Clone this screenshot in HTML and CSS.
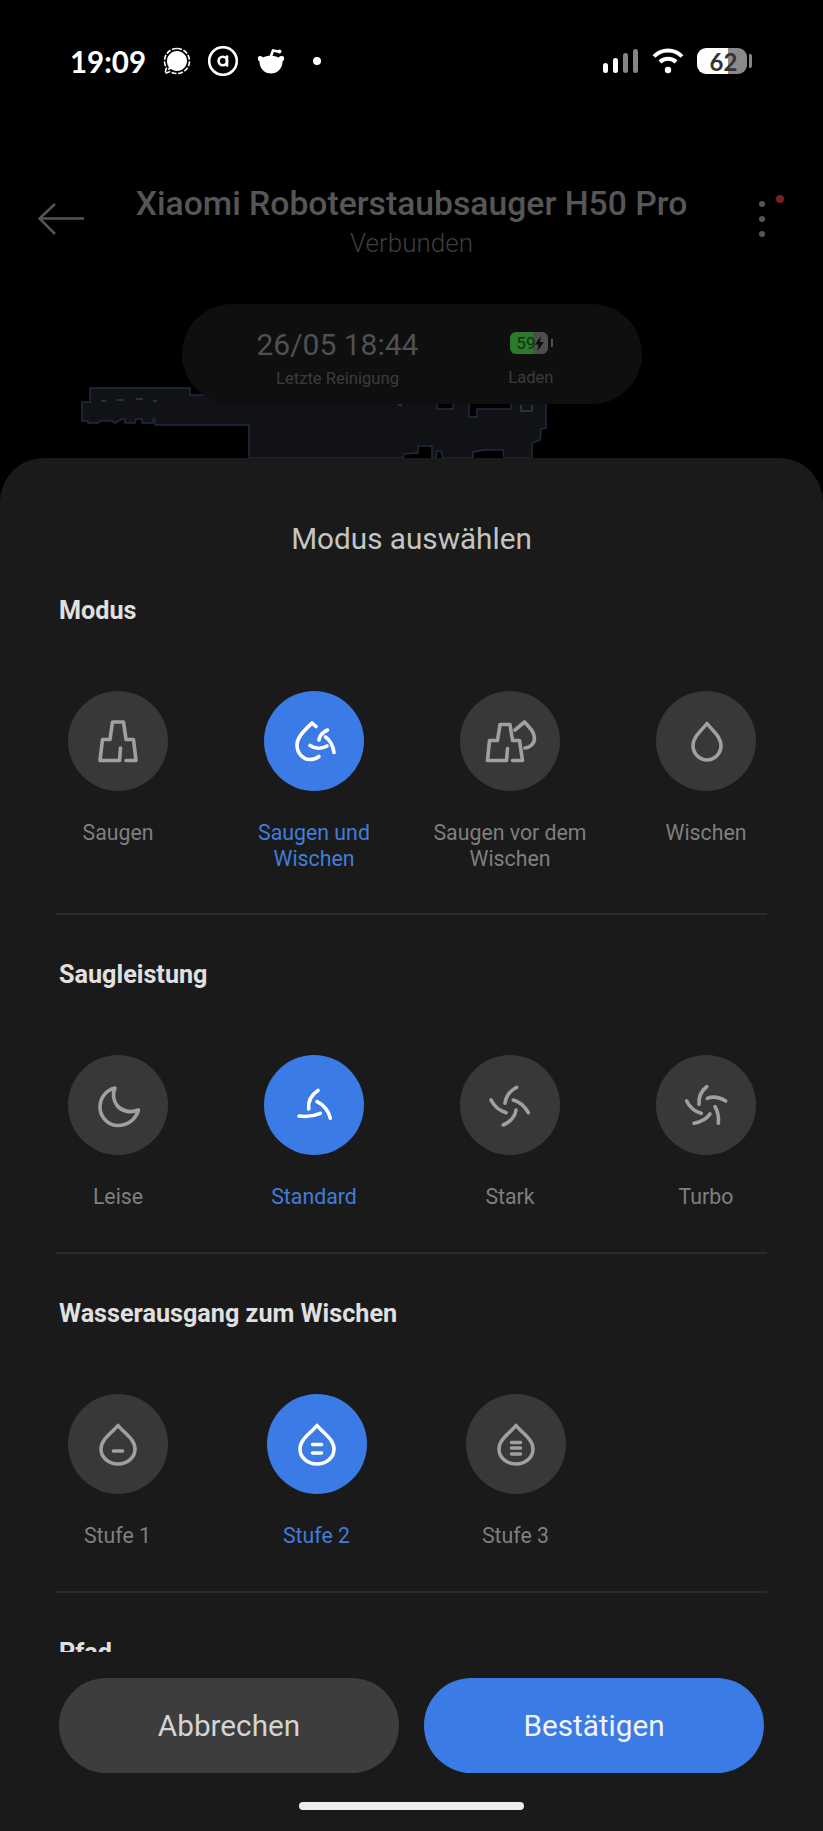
FILE: index.html
```html
<!DOCTYPE html>
<html lang="de">
<head>
	<meta charset="UTF-8">
	<meta name="viewport" content="width=device-width, initial-scale=1.0">
	<title>Modus auswählen</title>
	<link rel="stylesheet" href="styles.css">
</head>
<body>
<div class="phone">

	<!-- map behind the header -->
	<svg class="map" viewBox="0 0 823 470">
		<polygon class="map_room" points="90,388 190,388 190,395 546,395 546,428 541,429 540,440 532,443 532,458 504,458 503,450 484,450 473,452 473,458 443,458 441,451 437,451 436,458 432,458 432,446 418,446 418,453 404,454 403,458 249,458 249,425 155,425 155,419 153,419 153,423 142,423 142,419 136,419 135,423 125,423 125,419 122,419 115,423 112,421 100,421 98,423 88,423 88,421 82,421 82,402 90,402"/>
		<path class="map_hole" d="M437 400V409H453V400ZM469 400V417H477V409H511V400Z"/>
		<path class="map_mark" d="M101 401H106M117 400H124M136 399H143M153 401H157M521 405V411H532V405M398 404L402 406"/>
	</svg>

	<div class="status">
		<span class="clock">19:09</span>
		<svg class="st_signal" viewBox="0 0 28 28">
			<path class="dash" d="M14 1.5C21 1.5 26.5 7 26.5 14S21 26.5 14 26.5C11.5 26.5 9 25.8 7 24.6L2 26.5 3.4 21C2.2 19 1.500 16.500 1.500 14 1.500 7 7 1.500 14 1.500Z"/>
			<path class="fill" d="M14 4C19.500 4 24 8.500 24 14S19.500 24 14 24C11.800 24 9.700 23.300 8 22.100L4.800 23.200 5.800 20C4.600 18.300 4 16.200 4 14 4 8.500 8.500 4 14 4Z"/>
		</svg>
		<svg class="st_at" viewBox="0 0 30 30">
			<circle class="line" cx="15" cy="15" r="13.800"/>
			<circle class="line" cx="14.800" cy="15" r="4.200"/>
			<path class="line" d="M19 10.500V19.500"/>
		</svg>
		<svg class="st_reddit" viewBox="0 0 28 25">
			<path class="fill" d="M1 8C2.500 6.500 4.500 7 6 8.500 8 7.200 10.500 6.700 13.500 6.700 16.500 6.700 19.500 7.200 21.500 8.500 23 7 25.500 6.500 27 8 27.500 10.500 26.500 12 25.500 12.500 25.500 20 20 24.500 14 24.500S2.500 20 2.500 12.500C1.500 12 .5 10.500 1 8Z"/>
			<path class="line" d="M14 7L16 1.500 21 2.500"/>
			<circle class="fill" cx="22.500" cy="2.500" r="2"/>
		</svg>
		<span class="st_dot"></span>

		<span class="status_space"></span>

		<div class="bars">
			<span class="bar b1"></span>
			<span class="bar b2"></span>
			<span class="bar b3 off"></span>
			<span class="bar b4 off"></span>
		</div>
		<svg class="st_wifi" viewBox="0 0 32 26">
			<path class="wifi" d="M2 8.500C9.500 .5 22.500 .5 30 8.500"/>
			<path class="wifi" d="M8 14C12 9.800 20 9.800 24 14"/>
			<circle class="fill" cx="16" cy="22" r="3.200"/>
		</svg>
		<div class="batt">
			<span class="batt_num">62</span>
		</div>
		<span class="batt_nub"></span>
	</div>

	<div class="app_head">
		<svg class="back" viewBox="0 0 46 32">
			<path d="M46 15.500H2M17 1L1.500 15.500 17 31"/>
		</svg>
		<div class="app_title">
			<div class="name">Xiaomi Roboterstaubsauger H50 Pro</div>
			<div class="conn">Verbunden</div>
		</div>
		<div class="more">
			<span class="more_dot"></span>
			<span class="more_dot"></span>
			<span class="more_dot"></span>
			<span class="more_red"></span>
		</div>
	</div>

	<div class="pill">
		<div class="pill_col">
			<div class="pill_big">26/05 18:44</div>
			<div class="pill_small">Letzte Reinigung</div>
		</div>
		<div class="pill_col">
			<div class="mini_batt">
				<div class="mini_body">
					<span class="mini_num">59</span>
					<svg class="mini_bolt" viewBox="0 0 9 15"><path d="M6 0L0 8.500H3.500L2.500 15 9 6H5Z"/></svg>
				</div>
				<span class="mini_nub"></span>
			</div>
			<div class="pill_small">Laden</div>
		</div>
	</div>

	<!-- bottom sheet -->
	<div class="sheet">
		<div class="sheet_title">Modus auswählen</div>
		<div class="scroll">

			<div class="section">
				<div class="sec_label">Modus</div>
				<div class="opts four">
					<div class="opt">
						<div class="circle">
							<svg viewBox="0 0 100 100"><path d="M58 69.500H68L65.500 48.500H58L55.500 31H44.500L42 48.500H34.500L32 69.500H51.500L52.500 57"/></svg>
						</div>
						<div class="opt_text">Saugen</div>
					</div>
					<div class="opt on">
						<div class="circle">
							<svg viewBox="0 0 100 100"><path d="M52 35.500L48 32C40 40 33 46 33 54 33 63 40 69 46 68.500 50 68.500 53 67 55 65.500M63.500 39C59 41 55.500 44.500 55 49M46 54.500C51 58 58 58 63 55M61.500 46C66 49 69 55 70 61.500"/></svg>
						</div>
						<div class="opt_text">Saugen und Wischen</div>
					</div>
					<div class="opt">
						<div class="circle">
							<svg viewBox="0 0 100 100"><path d="M52.500 69.500H62.500L59.500 49.500H52.500L50 33.500H40L37.500 49.500H29.500L27.500 69.500H46.500L47.500 57.500M55 39L64.500 31C70 37 74.500 41 74.500 47.500 74.500 52.500 70 56.500 65 57"/></svg>
						</div>
						<div class="opt_text">Saugen vor dem Wischen</div>
					</div>
					<div class="opt">
						<div class="circle">
							<svg viewBox="0 0 100 100"><path d="M51 32.500C45 40 37 46 37 54.500 37 62.500 43.500 69 51 69 58.500 69 65 62.500 65 54.500 65 46 57 40 51 32.500Z"/></svg>
						</div>
						<div class="opt_text">Wischen</div>
					</div>
				</div>
			</div>

			<div class="section">
				<div class="sec_label">Saugleistung</div>
				<div class="opts four">
					<div class="opt">
						<div class="circle">
							<svg viewBox="0 0 100 100"><path d="M47 33C38 35 32 43 32 52 32 62 40 70.500 50 70.500 60 70.500 68 64 70.500 55 62 58.500 53.500 56 49 50.500 45 45 44.500 38 47 33Z"/></svg>
						</div>
						<div class="opt_text">Leise</div>
					</div>
					<div class="opt on">
						<div class="circle">
							<svg viewBox="0 0 100 100"><path d="M54 35.500C47 40 44 47 44.700 54M35 61C42 62 50 61 56.300 58.300M53 46.700C60 50 64.500 56 66.300 63.300"/></svg>
						</div>
						<div class="opt_text">Standard</div>
					</div>
					<div class="opt">
						<div class="circle">
							<svg viewBox="0 0 100 100"><path d="M56.700 32.300C50 35.500 46 41 45 48.300M53.300 45C60 47 65 51.500 68.300 57.700M56 55C55 61.500 50 67 43.300 70M31 45C34 51 39 55.500 46 57.700"/></svg>
						</div>
						<div class="opt_text">Stark</div>
					</div>
					<div class="opt">
						<div class="circle">
							<svg viewBox="0 0 100 100"><path d="M50.700 31.700C45 36 42.500 42 43 49.300M51.300 43.300C57 41 64 42.500 69.700 46M59 51.700C62 57 63 62.500 62.300 68.300M54 59C50.500 64 45 67 38 68.300M30.700 46C33.500 52 38.500 56.500 45.300 58.300"/></svg>
						</div>
						<div class="opt_text">Turbo</div>
					</div>
				</div>
			</div>

			<div class="section">
				<div class="sec_label">Wasserausgang zum Wischen</div>
				<div class="opts three">
					<div class="opt">
						<div class="circle">
							<svg viewBox="0 0 100 100"><path d="M50 31.500C44 39 33 45 33 55 33 63.500 40.500 70 50 70 59.500 70 67 63.500 67 55 67 45 56 39 50 31.500ZM45.500 57H54.500"/></svg>
						</div>
						<div class="opt_text">Stufe 1</div>
					</div>
					<div class="opt on">
						<div class="circle">
							<svg viewBox="0 0 100 100"><path d="M50 31.500C44 39 33 45 33 55 33 63.500 40.500 70 50 70 59.500 70 67 63.500 67 55 67 45 56 39 50 31.500ZM45.500 50.500H54.500M45.500 59H54.500"/></svg>
						</div>
						<div class="opt_text">Stufe 2</div>
					</div>
					<div class="opt">
						<div class="circle">
							<svg viewBox="0 0 100 100"><path d="M50 31.500C44 39 33 45 33 55 33 63.500 40.500 70 50 70 59.500 70 67 63.500 67 55 67 45 56 39 50 31.500ZM45.500 48.500H54.500M45.500 54H54.500M45.500 60H54.500"/></svg>
						</div>
						<div class="opt_text">Stufe 3</div>
					</div>
				</div>
			</div>

			<div class="section">
				<div class="sec_label">Pfad</div>
			</div>
		</div>

		<div class="foot">
			<div class="foot_btns">
				<button class="btn cancel" type="button">Abbrechen</button>
				<button class="btn ok" type="button">Bestätigen</button>
			</div>
			<div class="home_bar"></div>
		</div>
	</div>
</div>
</body>
</html>
```

FILE: styles.css
```css
body {
	margin: 0px;
	background-color: black;
	font-family: Roboto, "Liberation Sans", sans-serif;
}

.phone {
	position: relative;
	width: 823px;
	height: 1831px;
	overflow: hidden;
	background-color: black;
}

/* map */
.map {
	position: absolute;
	left: 0;
	top: 0;
	width: 823px;
	height: 470px;
}
.map_room {
	fill: #111216;
	stroke: #232a40;
	stroke-width: 1.5;
}
.map_hole {
	fill: black;
	stroke: #232a40;
	stroke-width: 1.5;
}
.map_mark {
	fill: none;
	stroke: #2a3044;
	stroke-width: 2;
}

/* status bar */
.status {
	display: flex;
	align-items: center;
	height: 122px;
	padding-left: 70px;
	box-sizing: border-box;
	color: white;
}
.clock {
	font-family: Lato, sans-serif;
	font-size: 29.500px;
	font-weight: 700;
	width: 93px;
}
.fill {
	fill: white;
}
.line {
	fill: none;
	stroke: white;
	stroke-width: 2.6;
	stroke-linecap: round;
}
.dash {
	fill: none;
	stroke: white;
	stroke-width: 1.600;
	stroke-dasharray: 5 1.600;
}
.st_signal {
	width: 28px;
	height: 28px;
}
.st_at {
	width: 30px;
	height: 30px;
	margin-left: 17px;
}
.st_reddit {
	width: 28px;
	height: 25px;
	margin-left: 19px;
}
.st_dot {
	width: 8px;
	height: 8px;
	border-radius: 50%;
	background-color: white;
	margin-left: 28px;
}
.status_space {
	flex: 1;
}
.bars {
	display: flex;
	align-items: flex-end;
	gap: 5px;
	height: 24px;
}
.bar {
	width: 5px;
	border-radius: 3px;
	background-color: white;
}
.b1 { height: 10px; }
.b2 { height: 15px; }
.b3 { height: 20px; }
.b4 { height: 24px; }
.bar.off {
	background-color: #858585;
}
.st_wifi {
	width: 32px;
	height: 26px;
	margin-left: 14px;
}
.wifi {
	fill: none;
	stroke: white;
	stroke-width: 4;
	stroke-linecap: butt;
}
.batt {
	display: flex;
	align-items: center;
	justify-content: center;
	width: 50px;
	height: 26px;
	margin-left: 13px;
	border-radius: 9px;
	background: linear-gradient(to right, white 62%, #8a8a8a 62%);
}
.batt_num {
	font-family: Lato, sans-serif;
	font-size: 24px;
	font-weight: 700;
	color: #333;
	margin-left: 3px;
}
.batt_nub {
	width: 3px;
	height: 14px;
	margin-left: 2px;
	margin-right: 71px;
	border-radius: 0 2px 2px 0;
	background-color: #858585;
}

/* device header */
.app_head {
	position: relative;
	display: flex;
	height: 182px;
	box-sizing: border-box;
}
.back {
	position: absolute;
	left: 38px;
	top: 81px;
	width: 46px;
	height: 32px;
	fill: none;
	stroke: #555;
	stroke-width: 2.500;
}
.app_title {
	width: 100%;
	text-align: center;
	padding-top: 62px;
}
.name {
	font-size: 33.700px;
	line-height: 40px;
	font-weight: 500;
	color: #565656;
}
.conn {
	font-size: 26px;
	line-height: 32px;
	font-weight: 300;
	color: #3e3e3e;
	margin-top: 3px;
}
.more {
	position: absolute;
	left: 759px;
	top: 79px;
	display: flex;
	flex-direction: column;
	gap: 9px;
}
.more_dot {
	width: 6px;
	height: 6px;
	border-radius: 50%;
	background-color: #555;
}
.more_red {
	position: absolute;
	left: 17px;
	top: -6px;
	width: 8px;
	height: 8px;
	border-radius: 50%;
	background-color: #7a2020;
}

/* last clean pill */
.pill {
	position: relative;
	display: flex;
	justify-content: space-between;
	width: 460px;
	height: 100px;
	margin: 0 auto;
	padding: 0 88px 0 75px;
	box-sizing: border-box;
	border-radius: 50px;
	background-color: #0f0f0f;
}
.pill_col {
	display: flex;
	flex-direction: column;
	align-items: center;
}
.pill_big {
	font-size: 30px;
	line-height: 34px;
	color: #505050;
	margin-top: 24px;
}
.pill_small {
	font-size: 16.600px;
	line-height: 20px;
	color: #3c3c3c;
	margin-top: 7px;
}
.mini_batt {
	display: flex;
	align-items: center;
	margin-top: 28px;
	margin-bottom: 7px;
	margin-left: 2px;
}
.mini_body {
	display: flex;
	align-items: center;
	width: 38px;
	height: 22px;
	padding-left: 6px;
	box-sizing: border-box;
	border-radius: 6px;
	background: linear-gradient(to right, #2d7a2c 60%, #4e4e4e 60%);
}
.mini_num {
	font-size: 17px;
	color: #10300f;
}
.mini_bolt {
	width: 9px;
	height: 15px;
	fill: #0c0c0c;
}
.mini_nub {
	width: 2px;
	height: 8px;
	margin-left: 3px;
	background-color: #4e4e4e;
}

/* sheet */
.sheet {
	position: absolute;
	left: 0;
	right: 0;
	top: 458px;
	bottom: 0;
	display: flex;
	flex-direction: column;
	border-radius: 44px 44px 0 0;
	background-color: #1a1a1a;
}
.sheet_title {
	font-size: 29.700px;
	line-height: 34px;
	color: #c4c4c4;
	text-align: center;
	padding-top: 64px;
}
.scroll {
	height: 1096px;
	overflow: hidden;
}
.section {
	margin: 0 56px;
	padding: 45px 0 42px;
	border-top: 2px solid #2b2b2b;
}
.section:first-child {
	padding-top: 40px;
	padding-bottom: 41px;
	border-top: none;
}
.sec_label {
	font-size: 25.200px;
	line-height: 30px;
	font-weight: 700;
	color: #e0e0e0;
	margin-left: 3px;
}
.opts {
	display: grid;
	margin: 65px -36px 0;
}
.four {
	grid-template-columns: repeat(4, 196px);
}
.three {
	grid-template-columns: repeat(3, 199px);
	margin-left: -38px;
}
.opt {
	display: flex;
	flex-direction: column;
	align-items: center;
}
.circle {
	width: 100px;
	height: 100px;
	border-radius: 50%;
	background-color: #383838;
}
.circle svg {
	display: block;
	width: 100px;
	height: 100px;
	fill: none;
	stroke: #a0a0a0;
	stroke-width: 3.600;
	stroke-linecap: round;
	stroke-linejoin: round;
}
.opt_text {
	max-width: 170px;
	margin-top: 29px;
	font-size: 21.300px;
	line-height: 26px;
	color: #7f7f7f;
	text-align: center;
}
.opt.on .circle {
	background-color: #3b7be6;
}
.opt.on .circle svg {
	stroke: white;
}
.opt.on .opt_text {
	color: #3f7edc;
}

/* buttons */
.foot {
	flex: 1;
	padding-top: 26px;
	background-color: #1a1a1a;
}
.foot_btns {
	display: flex;
	gap: 25px;
	padding: 0 59px;
}
.btn {
	flex: 1;
	height: 95px;
	border: none;
	border-radius: 48px;
	font-family: Roboto, sans-serif;
	font-size: 29.700px;
}
.cancel {
	background-color: #3d3d3d;
	color: #d4d4d4;
}
.ok {
	background-color: #3b7be6;
	color: #f2f2f2;
}
.home_bar {
	width: 225px;
	height: 8px;
	margin: 29px auto 0;
	border-radius: 4px;
	background-color: #ececec;
}
```
